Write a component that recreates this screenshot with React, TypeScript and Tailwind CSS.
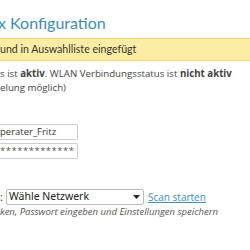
export default function App() {
  return (
    <div className="h-[250px] w-[250px] overflow-hidden bg-white" style={{ fontFamily: '"Open Sans", sans-serif' }}>
      <h1 className="-ml-[2px] pt-[13px] text-[16px] leading-[20px] font-normal text-[#3b8dbd] whitespace-nowrap" style={{ fontFamily: 'Lato, sans-serif' }}>
        x Konfiguration
      </h1>
      <div className="mt-[5px] h-[23px] border-t border-b border-[#f3d774] bg-[#fdeda4] text-[10.6px] leading-[21px] text-[#333] whitespace-nowrap" style={{ fontFamily: 'Lato, sans-serif' }}>
        und in Auswahlliste eingefügt
      </div>
      <div className="mt-[6px] text-[9.7px] leading-[14px] text-[#444] whitespace-nowrap">
        <div>
          s ist <b>aktiv</b>. WLAN Verbindungsstatus ist <b>nicht aktiv</b>
        </div>
        <div>elung möglich)</div>
      </div>
      <div className="mt-[29px] flex flex-col gap-[3px]">
        <div className="flex h-[16px] w-[78px] items-center overflow-hidden rounded-r-[2px] border border-l-0 border-[#ccc] text-[9.5px] text-[#333] whitespace-nowrap">
          perater_Fritz
        </div>
        <div className="flex h-[16px] w-[78px] items-center overflow-hidden rounded-r-[2px] border border-l-0 border-[#ccc] text-[9.5px] tracking-[0.5px] text-[#555] whitespace-nowrap">
          *************
        </div>
      </div>
      <div className="mt-[30px] flex items-center whitespace-nowrap">
        <span className="w-[6px] text-[11px] text-[#333]">:</span>
        <div className="flex h-[16px] w-[138px] items-center justify-between rounded-[2px] border border-[#bbb] pl-[2px] pr-[3px] text-[10.5px] text-[#222]" style={{ fontFamily: '"Noto Sans", sans-serif' }}>
          <span>Wähle Netzwerk</span>
          <svg width="7" height="4" viewBox="0 0 7 4"><path d="M0 0h7L3.5 4z" fill="#222" /></svg>
        </div>
        <a className="ml-[4px] text-[10px] text-[#3b8dbd] underline">Scan starten</a>
      </div>
      <div className="-mt-[1px] text-[9.5px] italic text-[#555] whitespace-nowrap">
        ken, Passwort eingeben und Einstellungen speichern
      </div>
    </div>
  );
}
